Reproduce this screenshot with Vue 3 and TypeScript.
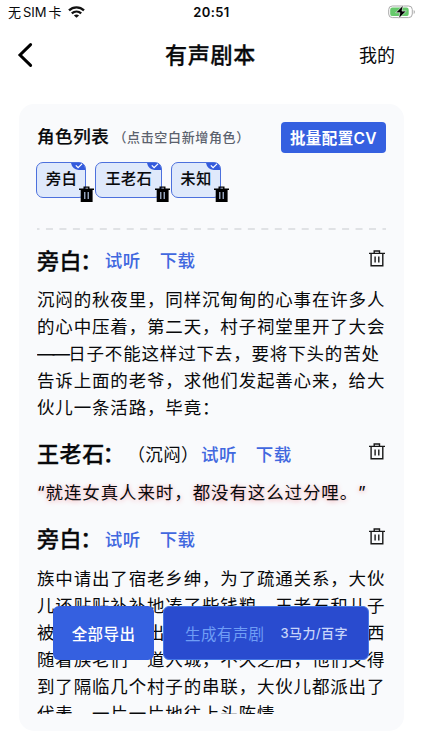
<script setup lang="ts">
interface Passage {
  speaker: string
  mood?: string
  lines: string[]
  quote?: boolean
}

const roles: string[] = ['旁白', '王老石', '未知']

const passages: Passage[] = [
  {
    speaker: '旁白',
    lines: [
      '沉闷的秋夜里，同样沉甸甸的心事在许多人',
      '的心中压着，第二天，村子祠堂里开了大会',
      '——日子不能这样过下去，要将下头的苦处',
      '告诉上面的老爷，求他们发起善心来，给大',
      '伙儿一条活路，毕竟：',
    ],
  },
  { speaker: '王老石', mood: '（沉闷）', quote: true, lines: ['“就连女真人来时，都没有这么过分哩。”'] },
  {
    speaker: '旁白',
    lines: [
      '族中请出了宿老乡绅，为了疏通关系，大伙',
      '儿还贴贴补补地凑了些钱粮，王老石和儿子',
      '被众人推举了出来，带着大伙儿凑出的东西',
      '随着族老们一道入城，不久之后，他们又得',
      '到了隔临几个村子的串联，大伙儿都派出了',
      '代表，一片一片地往上头陈情。',
    ],
  },
]

// Leading dashes are set tighter than the rest of the line.
const dashes = (line: string): string => line.match(/^—+/)?.[0] ?? ''
</script>

<template>
  <div class="screen">
    <div class="status">
      <div class="carrier">
        <span>无 SIM 卡</span>
        <svg width="17" height="12" viewBox="0 0 17 12" fill="none" stroke="#111" stroke-width="2.3">
          <path d="M1 4.4C5.2 .3 11.8 .3 16 4.4M3.8 7.4c2.7-2.5 6.7-2.5 9.4 0" />
          <path d="M8.5 11.8 5.9 9.4c1.5-1.3 3.7-1.3 5.2 0Z" fill="#111" stroke="none" />
        </svg>
      </div>
      <div class="time">20:51</div>
      <svg class="battery" width="28" height="14" viewBox="0 0 28 14">
        <rect x=".7" y="1" width="23.6" height="11.6" rx="3.6" fill="#fff" stroke="#aaa" />
        <rect x="2.2" y="2.5" width="18.5" height="8.6" rx="2.2" fill="#66c96b" />
        <path d="M25.7 5v4c1.6-.6 1.6-3.4 0-4Z" fill="#aaa" />
        <path d="M15.2.2 7.7 7.7h4.2l-1.2 5.9 7.6-7.5h-4.3Z" fill="#000" stroke="#fff" stroke-width=".6" />
      </svg>
    </div>

    <header class="nav">
      <svg class="back" width="16" height="26" viewBox="0 0 16 26" fill="none" stroke="#000" stroke-width="3">
        <path d="M13.6 2.6 3 13l10.6 10.4" stroke-linecap="round" />
      </svg>
      <h1>有声剧本</h1>
      <span class="mine">我的</span>
    </header>

    <main class="card">
      <div class="role-head">
        <h2>角色列表</h2>
        <span class="hint">（点击空白新增角色）</span>
        <button class="config">批量配置CV</button>
      </div>
      <div class="roles">
        <div v-for="role in roles" :key="role" class="role">
          <span class="role-name">{{ role }}</span>
          <span class="tick">
            <svg width="14" height="7" viewBox="0 0 14 7">
              <path d="M0 0H9.5Q13.5 .5 14 5V7H7.5Q1.3 6.3 0 0Z" fill="#345bdc" />
              <path d="m4.8 2.4 2.3 2.3L11 .9" fill="none" stroke="#fff" stroke-width="1.3" />
            </svg>
          </span>
          <svg class="role-trash" width="15" height="16" viewBox="0 0 15 16">
            <path d="M4.5 2.5V.5h6v2H15v1.6h-1.4V16H1.7V4.1H0V2.5Zm1.4 0h3.2v-.8H5.9Z" fill="#000" fill-rule="evenodd" />
            <path d="M5.8 6v7M9.2 6v7" stroke="#c5d7f7" stroke-width="1.1" />
          </svg>
        </div>
      </div>
      <svg class="divider" width="349" height="2" viewBox="0 0 349 2">
        <path d="M0 1H349" stroke="#e0e2e5" stroke-width="2" stroke-dasharray="7 6.46" stroke-dashoffset="4.5" />
      </svg>

      <div class="script">
        <section v-for="(passage, index) in passages" :key="index" class="passage">
          <div class="speaker-row">
            <h3>{{ passage.speaker }}<span class="colon">：</span></h3>
            <span v-if="passage.mood" class="mood">{{ passage.mood }}</span>
            <a class="listen">试听</a>
            <a>下载</a>
            <svg class="trash" width="16" height="17" viewBox="0 0 16 17" fill="none" stroke="#181818" stroke-width="1.4">
              <path d="M0 3.4h16M2.1 3.5v12.2h11.7V3.5M5.2 3.2V1h5.3v2.2M6.1 6.5v6M9.8 6.5v6" />
            </svg>
          </div>
          <p :class="{ quote: passage.quote }">
            <span v-for="line in passage.lines" :key="line" class="line"><span v-if="dashes(line)" class="dash">{{ dashes(line) }}</span>{{ line.slice(dashes(line).length) }}</span>
          </p>
        </section>
      </div>
    </main>

    <div class="actions">
      <button class="export">全部导出</button>
      <button class="generate"><span>生成有声剧</span><small>3马力/百字</small></button>
    </div>
  </div>
</template>

<style>
body { background: #fff; }
</style>

<style scoped>
* { box-sizing: border-box; }
.screen {
  position: relative;
  width: 422px;
  height: 750px;
  overflow: hidden;
  background: #fff;
  color: #08090b;
  font-family: Inter, "Noto Sans CJK SC", sans-serif;
  text-spacing-trim: space-all;
}
h1, h2, h3, p { margin: 0; }
button { border: 0; padding: 0; font-family: inherit; white-space: nowrap; }
.status {
  display: grid;
  grid-template-columns: 1fr auto 1fr;
  align-items: center;
  height: 24px;
  padding: 0 7px 0 8px;
}
.carrier { display: flex; align-items: center; gap: 6px; font-size: 13px; word-spacing: -1.7px; margin-top: -1px; }
.time { font-size: 13px; font-weight: 600; letter-spacing: .4px; }
.battery { justify-self: end; margin-right: -1px; }
.nav {
  display: grid;
  grid-template-columns: 1fr auto 1fr;
  align-items: center;
  height: 62px;
  padding: 0 27px 0 17px;
}
.nav h1 { font-size: 22px; font-weight: 500; letter-spacing: .7px; -webkit-text-stroke: .3px; margin: -4px 0 0 9px; }
.nav .back { margin-top: -1px; }
.mine { justify-self: end; font-size: 18px; margin-top: -2px; }
.card {
  width: 385px;
  height: 627px;
  margin: 18px 0 0 19px;
  padding: 18px 18px 17px;
  border-radius: 15px;
  background: #f9fafc;
}
.role-head { display: flex; align-items: center; height: 31px; }
.role-head h2 { font-size: 17.5px; font-weight: 500; letter-spacing: .6px; -webkit-text-stroke: .2px; margin-top: -5px; }
.hint { margin: -2px 0 0 4px; font-size: 13px; font-weight: 500; letter-spacing: .65px; color: #5b616d; white-space: nowrap; }
.config {
  width: 105px;
  height: 31px;
  margin-left: auto;
  padding-bottom: 2px;
  border-radius: 4px;
  background: #3560e0;
  color: #fff;
  font-size: 15.5px;
  font-weight: 600;
  letter-spacing: .4px;
}
.roles { display: flex; gap: 9px; margin: 9px 0 0 -1px; height: 36px; }
.role {
  position: relative;
  height: 36px;
  padding: 0 8px 0 9px;
  border: 1px solid #4c70dd;
  border-radius: 7px;
  background: #dfe9fb;
}
.role-name { display: block; font-size: 15px; font-weight: 500; line-height: 31px; letter-spacing: .7px; -webkit-text-stroke: .15px; }
.tick { position: absolute; top: 0; right: 0; width: 14px; height: 7px; display: flex; }
.role-trash { position: absolute; right: -9px; bottom: -5px; }
.divider { display: block; margin-top: 29.5px; }
.script { height: 484px; padding-top: 6px; overflow: hidden; }
.passage { margin-bottom: 7.5px; }
.speaker-row { display: flex; align-items: center; height: 50.7px; white-space: nowrap; }
.speaker-row h3 { font-size: 22px; font-weight: 500; letter-spacing: .6px; -webkit-text-stroke: .3px; margin-top: -4px; }
.colon { margin: 0 2px 0 -2px; }
.speaker-row a { color: #4168df; font-size: 17.5px; font-weight: 500; letter-spacing: .4px; margin: -2px 19px 0 0; }
.mood { font-size: 17.5px; letter-spacing: .4px; margin: -2px 2px 0 0; }
.trash { margin: -5px 1px 0 auto; }
p { font-size: 17.5px; line-height: 27px; letter-spacing: .83px; white-space: nowrap; }
.line { display: block; }
.dash { letter-spacing: -1.9px; }
.quote { text-shadow: 0 1px 5px #f5a0a8; letter-spacing: .88px; }
.actions { position: absolute; left: 53px; top: 606px; display: flex; gap: 9px; }
.export {
  width: 101px;
  height: 54px;
  padding-bottom: 1px;
  border-radius: 6px;
  background: #3560e0;
  color: #fff;
  font-size: 15.5px;
  font-weight: 500;
  letter-spacing: .4px;
}
.generate {
  display: flex;
  align-items: center;
  width: 206px;
  height: 54px;
  padding: 0 0 1px 21px;
  border: 1px solid #4779e6;
  border-radius: 6px;
  background: #294bcf;
  color: #6f9df5;
  font-size: 15.5px;
  letter-spacing: .4px;
}
.generate small { margin-left: 16px; color: #c8d5fa; font-size: 13px; font-weight: 500; }
</style>
